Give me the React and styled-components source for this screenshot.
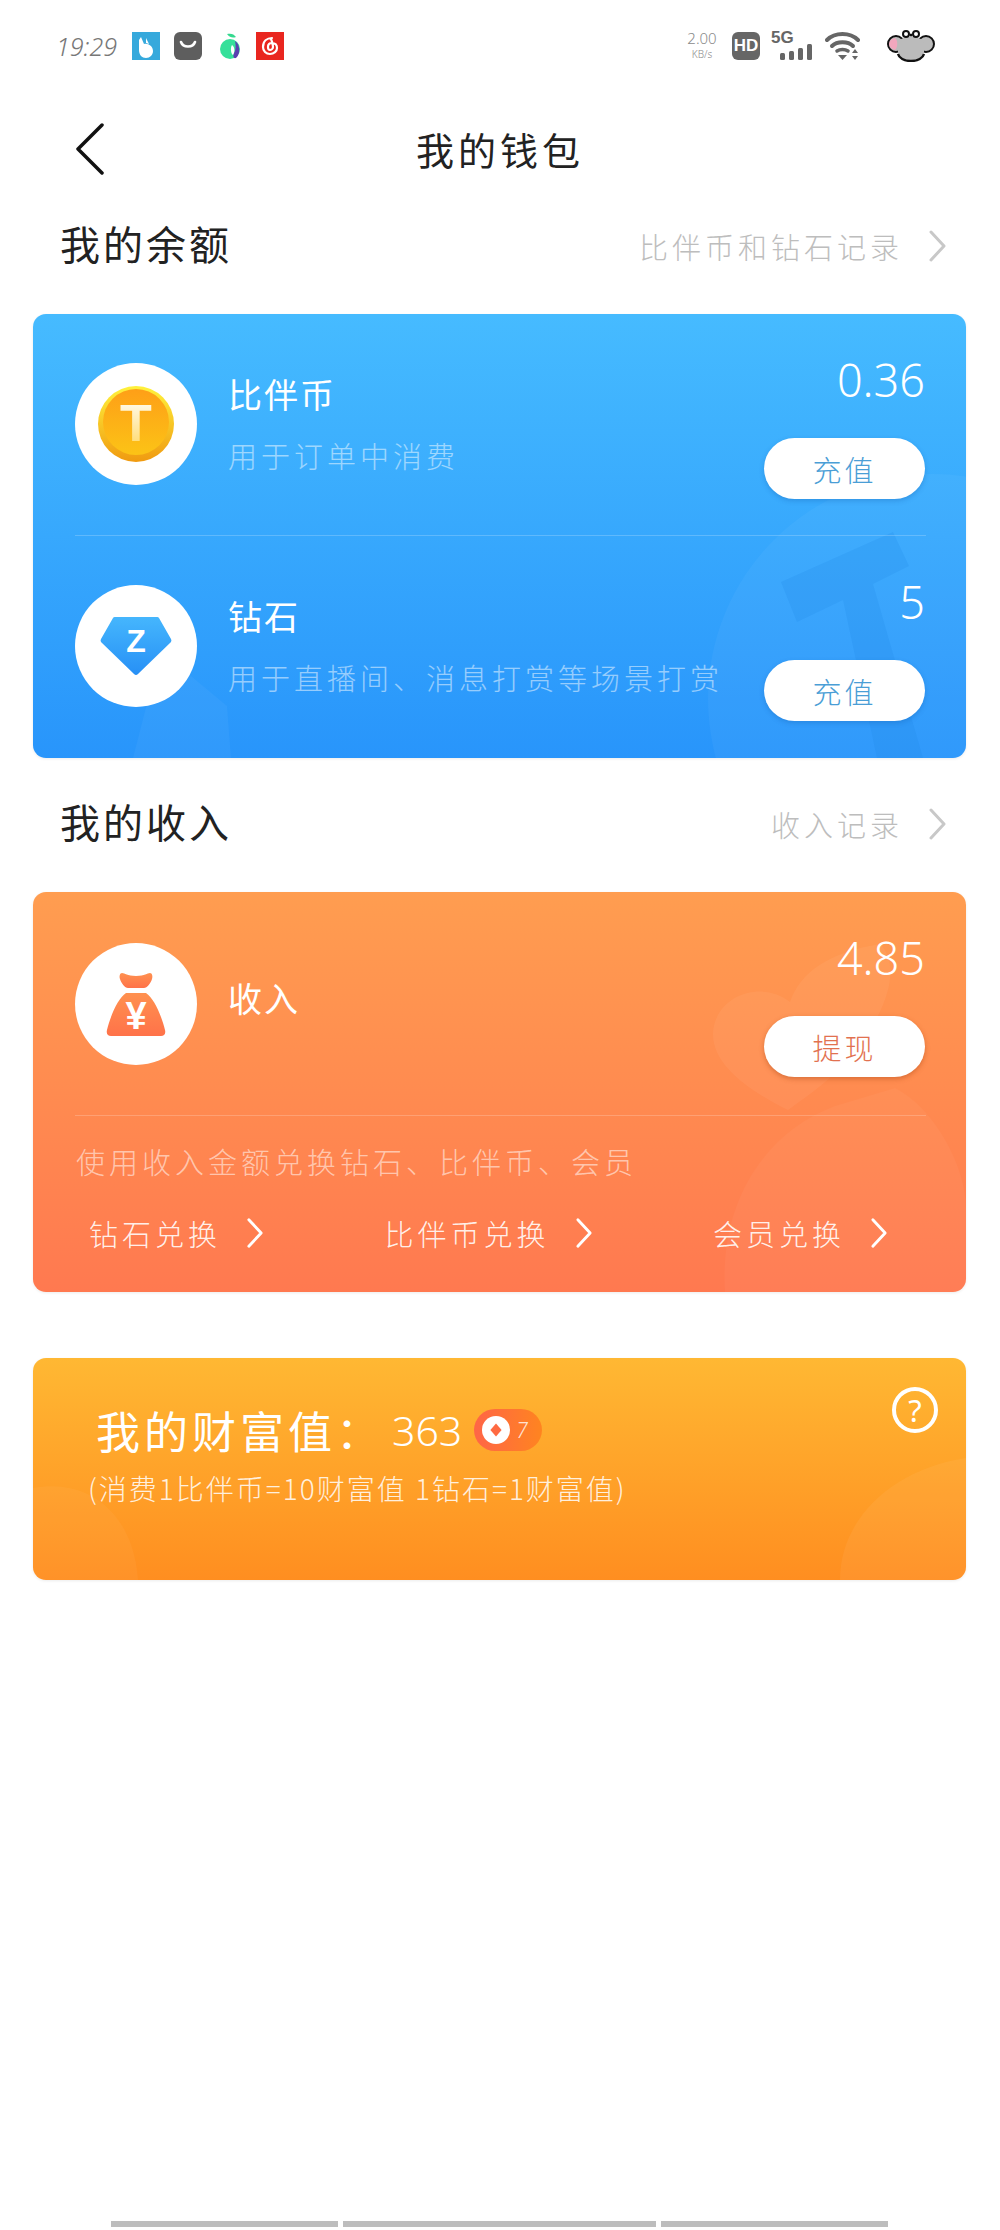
import React from 'react';
import styled, { createGlobalStyle } from 'styled-components';

const cjk = '"Noto Sans CJK SC", "Noto Sans", sans-serif';

const GlobalStyle = createGlobalStyle`
	* {
		box-sizing: border-box;
	}
	html, body {
		background: #fff;
		margin: 0;
		padding: 0;
	}
	body {
		color: #222;
		font-family: ${cjk};
		font-weight: 300;
	}
`;

const Page = styled.div`
	display: flex;
	flex-direction: column;
	min-height: 2230px;
	width: 1000px;
`;

const StatusBar = styled.div`
	align-items: center;
	display: flex;
	height: 62px;
	justify-content: space-between;
	padding: 30px 65px 0 56px;
`;

const StatusGroup = styled.div`
	align-items: center;
	display: flex;
`;

const Time = styled.span`
	color: #777;
	font-family: "Noto Sans", sans-serif;
	font-size: 25px;
	font-style: italic;
	font-weight: 300;
	margin-right: 14px;
	width: 62px;
`;

const AppIcon = styled.svg`
	display: block;
	height: 28px;
	margin-right: ${props => props.$gap}px;
	width: 28px;
`;

const Speed = styled.div`
	color: #8a8a8a;
	display: flex;
	flex-direction: column;
	font-family: "Noto Sans", sans-serif;
	font-size: 15px;
	line-height: 15px;
	margin-right: 15px;
	text-align: center;
	width: 30px;
	small {
		font-size: 10px;
		margin-top: 1px;
	}
`;

const HdBadge = styled.span`
	align-items: center;
	background: #666;
	border-radius: 6px;
	color: #fff;
	display: flex;
	font-family: "Liberation Sans", sans-serif;
	font-size: 17px;
	font-weight: 700;
	height: 28px;
	justify-content: center;
	margin-right: 11px;
	width: 28px;
`;

const Signal = styled.div`
	display: flex;
	flex-direction: column;
	height: 28px;
	margin-right: 12px;
	width: 42px;
	span {
		color: #666;
		font-family: "Liberation Sans", sans-serif;
		font-size: 17px;
		font-weight: 700;
		line-height: 12px;
	}
	svg {
		align-self: flex-end;
		margin-top: 0;
	}
`;

const TitleBar = styled.header`
	align-items: center;
	display: grid;
	grid-template-columns: 1fr auto 1fr;
	margin-top: 57px;
	padding: 0 75px;
`;

const PageTitle = styled.h1`
	font-size: 38px;
	font-weight: 400;
	letter-spacing: 4px;
	line-height: 60px;
	margin: 0;
`;

const SectionHead = styled.div`
	align-items: center;
	display: flex;
	height: 64px;
	justify-content: space-between;
	margin: ${props => props.$top}px 0 ${props => props.$bottom}px;
	padding: 0 53px 0 60px;
`;

const SectionTitle = styled.h2`
	font-size: 40px;
	font-weight: 400;
	letter-spacing: 3px;
	margin: 0;
`;

const RecordLink = styled.a`
	align-items: center;
	color: #bdbdbd;
	display: flex;
	font-size: 29px;
	gap: 25px;
	letter-spacing: 4px;
	margin-top: 6px;
`;

const Card = styled.section`
	background: linear-gradient(to bottom, ${props => props.$from}, ${props => props.$to});
	border-radius: 13px;
	box-shadow: 0 1px 3px rgba(0, 0, 0, 0.08);
	color: #fff;
	height: ${props => props.$height}px;
	margin: ${props => props.$top || 0}px 34px 0 33px;
	overflow: hidden;
	position: relative;
`;

const Watermark = styled.svg`
	height: 100%;
	left: 0;
	pointer-events: none;
	position: absolute;
	top: 0;
	width: 100%;
`;

const CardBody = styled.div`
	position: relative;
`;

const Row = styled.div`
	align-items: flex-start;
	display: flex;
	height: ${props => props.$height}px;
	padding: 42px 41px 0 42px;
`;

const Avatar = styled.div`
	align-items: center;
	background: #fff;
	border-radius: 50%;
	display: flex;
	flex: none;
	height: 122px;
	justify-content: center;
	margin-top: ${props => props.$top}px;
	width: 122px;
`;

const RowText = styled.div`
	flex: 1;
	margin-left: 31px;
	margin-top: ${props => props.$top}px;
`;

const RowTitle = styled.div`
	font-size: 34px;
	font-weight: 400;
	letter-spacing: 2px;
	line-height: 44px;
`;

const RowSub = styled.div`
	color: rgba(255, 255, 255, 0.5);
	font-size: 29px;
	letter-spacing: 4px;
	line-height: 44px;
	margin-top: 17px;
	white-space: nowrap;
`;

const RowSide = styled.div`
	align-items: flex-end;
	display: flex;
	flex-direction: column;
	flex: none;
`;

const Amount = styled.div`
	font-family: "Noto Sans", sans-serif;
	font-size: 45px;
	font-weight: 300;
	line-height: 48px;
`;

const ActionButton = styled.button`
	background: #fff;
	border: 0;
	border-radius: 31px;
	box-shadow: 0 2px 5px ${props => props.$shadow};
	color: ${props => props.$color};
	font-family: ${cjk};
	font-size: 29px;
	font-weight: 300;
	height: 61px;
	letter-spacing: 3px;
	margin-top: 34px;
	padding: 0;
	width: 161px;
`;

const Divider = styled.div`
	background: rgba(255, 255, 255, 0.2);
	height: 1px;
	margin: 0 40px 0 42px;
`;

const ExchangeNote = styled.div`
	color: rgba(255, 255, 255, 0.55);
	font-size: 29px;
	letter-spacing: 4px;
	line-height: 44px;
	margin-top: 23px;
	padding-left: 43px;
	white-space: nowrap;
`;

const ExchangeLinks = styled.div`
	display: flex;
	justify-content: space-between;
	margin-top: 28px;
	padding: 0 78px 0 56px;
`;

const ExchangeLink = styled.a`
	align-items: center;
	color: rgba(255, 255, 255, 0.9);
	display: flex;
	font-size: 29px;
	gap: 25px;
	letter-spacing: 4px;
	line-height: 44px;
	white-space: nowrap;
`;

const WealthTitle = styled.div`
	align-items: center;
	display: flex;
	font-size: 44px;
	font-weight: 400;
	height: 96px;
	letter-spacing: 4px;
	padding: 48px 0 0 63px;
	span {
		font-family: "Noto Sans", sans-serif;
		font-size: 41px;
		font-weight: 300;
		letter-spacing: 0;
		margin-left: 8px;
	}
`;

const LevelBadge = styled.div`
	align-items: center;
	background: linear-gradient(to right, #ff6547, #ff8420);
	border-radius: 21px;
	display: flex;
	height: 42px;
	margin-left: 12px;
	padding-left: 8px;
	width: 68px;
	i {
		color: rgba(255, 255, 255, 0.8);
		font-family: "Noto Sans", sans-serif;
		font-size: 21px;
		font-weight: 300;
		margin-left: 6px;
	}
`;

const WealthNote = styled.div`
	color: rgba(255, 255, 255, 0.85);
	font-size: 28px;
	letter-spacing: 2px;
	line-height: 36px;
	margin-top: 16px;
	padding-left: 55px;
	white-space: nowrap;
`;

const HelpButton = styled.div`
	align-items: center;
	border: 4px solid #fff;
	border-radius: 50%;
	display: flex;
	font-family: "Noto Sans", sans-serif;
	font-size: 31px;
	font-weight: 400;
	height: 46px;
	justify-content: center;
	line-height: 1;
	position: absolute;
	right: 28px;
	top: 29px;
	width: 46px;
`;

const NavBars = styled.div`
	display: flex;
	gap: 5px;
	margin-top: auto;
	padding: 0 112px 3px 111px;
`;

const NavBar = styled.div`
	background: #bdbdbd;
	flex: ${props => props.$size};
	height: 6px;
`;

const Chevron = ({ color, width = 19, height = 32, weight = 3 }) => (
	<svg width={width} height={height} viewBox="0 0 19 32" fill="none">
		<path d="M3 2l13 14L3 30" stroke={color} strokeWidth={weight} strokeLinecap="round" strokeLinejoin="round" />
	</svg>
);

const StatusIcons = () => (
	<StatusGroup>
		<Time>19:29</Time>
		<AppIcon $gap={14} viewBox="0 0 28 28">
			<rect width="28" height="28" fill="#36a9dc" />
			<path d="M9 5l3 7c4-1 9 2 9 7 0 4-3 7-7 7s-7-3-7-8V8z" fill="#fff" />
			<path d="M14 6l3 6-3-1z" fill="#fff" />
		</AppIcon>
		<AppIcon $gap={15} viewBox="0 0 28 28">
			<rect width="28" height="28" rx="6" fill="#5e5e5e" />
			<path d="M7 10c2 6 12 6 14 0" stroke="#fff" strokeWidth="2.6" fill="none" strokeLinecap="round" />
		</AppIcon>
		<AppIcon $gap={11} viewBox="0 0 28 28">
			<path d="M10 2c4-1 7 0 9 3-3 1-6 1-9-3z" fill="#35d98f" />
			<circle cx="13" cy="17" r="10" fill="#35e09a" />
			<path d="M18 9c5 3 6 13 1 17-3 1-3-3-2-5 2-3 2-8 1-12z" fill="#5b3fb0" />
			<path d="M15 13c3 2 3 7 1 10-2-1-3-7-1-10z" fill="#fff" />
		</AppIcon>
		<AppIcon $gap={0} viewBox="0 0 28 28">
			<rect width="28" height="28" fill="#e9261f" />
			<path d="M16 6c-5 0-9 3-9 9 0 4 3 7 7 7s7-3 7-6-2-5-5-5-4 2-4 4 1 3 2 3 3-1 3-3c0-3-1-6-2-8" stroke="#fff" strokeWidth="2.2" fill="none" strokeLinecap="round" />
		</AppIcon>
	</StatusGroup>
);

const SystemIcons = () => (
	<StatusGroup>
		<Speed>
			2.00
			<small>KB/s</small>
		</Speed>
		<HdBadge>HD</HdBadge>
		<Signal>
			<span>5G</span>
			<svg width="33" height="16" viewBox="0 0 33 16" fill="#666">
				<rect x="0" y="9" width="5" height="7" rx="1.5" />
				<rect x="9" y="7" width="5" height="9" rx="1.5" />
				<rect x="18" y="4" width="5" height="12" rx="1.5" />
				<rect x="27" y="0" width="5" height="16" rx="1.5" />
			</svg>
		</Signal>
		<svg width="36" height="28" viewBox="0 0 36 28" fill="none" style={{ marginRight: 26 }}>
			<path d="M2 8c8-8 23-8 31 0" stroke="#666" strokeWidth="4" strokeLinecap="round" />
			<path d="M7 14c5-5 16-5 21 0" stroke="#666" strokeWidth="4" strokeLinecap="round" />
			<path d="M12 19c3-2 8-2 11 0" stroke="#666" strokeWidth="3.5" strokeLinecap="round" />
			<path d="M13 23h9l-4.500 5z" fill="#666" />
			<path d="M30 17l3 4h-6zM30 28l3-4h-6z" fill="#666" />
		</svg>
		<svg width="48" height="32" viewBox="0 0 48 32">
			<circle cx="9" cy="14" r="8" fill="#bbb" stroke="#111" strokeWidth="2" />
			<circle cx="39" cy="14" r="8" fill="#bbb" stroke="#111" strokeWidth="2" />
			<path d="M2 14a7 7 0 0 1 6-6c3 2 3 9 0 12-3-1-6-3-6-6z" fill="#f2a7bd" />
			<path d="M11 14c0-5 6-7 13-7s13 2 13 7v8c0 5-5 9-13 9s-13-4-13-9z" fill="#bbb" />
			<path d="M11 24c1 4 6 7 13 7s12-3 13-7" stroke="#111" strokeWidth="2.4" fill="none" />
			<circle cx="19" cy="4" r="3" fill="none" stroke="#111" strokeWidth="2" />
			<circle cx="29" cy="4" r="3" fill="none" stroke="#111" strokeWidth="2" />
			<circle cx="24" cy="5" r="1.500" fill="#111" />
		</svg>
	</StatusGroup>
);

const CoinIcon = () => (
	<svg width="76" height="76" viewBox="0 0 76 76">
		<defs>
			<linearGradient id="coinRim" x1="0" y1="0" x2="0" y2="1">
				<stop offset="0" stopColor="#fff23c" />
				<stop offset="1" stopColor="#f09a10" />
			</linearGradient>
			<linearGradient id="coinFace" x1="0" y1="0" x2="0" y2="1">
				<stop offset="0" stopColor="#fe9f17" />
				<stop offset="1" stopColor="#fcc316" />
			</linearGradient>
			<linearGradient id="coinT" x1="0" y1="0" x2="0" y2="1">
				<stop offset="0" stopColor="#fff" />
				<stop offset="1" stopColor="#ffd75e" />
			</linearGradient>
		</defs>
		<circle cx="38" cy="38" r="38" fill="url(#coinRim)" />
		<circle cx="38" cy="36" r="33" fill="url(#coinFace)" />
		<text x="38" y="55" textAnchor="middle" fontFamily="Liberation Sans" fontWeight="700" fontSize="52" fill="url(#coinT)">T</text>
	</svg>
);

const DiamondIcon = () => (
	<svg width="72" height="60" viewBox="0 0 72 60">
		<defs>
			<linearGradient id="gem" x1="0" y1="0" x2="0" y2="1">
				<stop offset="0" stopColor="#45b6fd" />
				<stop offset="1" stopColor="#2790f6" />
			</linearGradient>
		</defs>
		<path d="M15 1h42a2 2 0 0 1 2 1l12 21a3 3 0 0 1 0 3L38 58a3 3 0 0 1-4 0L1 26a3 3 0 0 1 0-3L13 2a2 2 0 0 1 2-1z" fill="url(#gem)" />
		<text x="36" y="36" textAnchor="middle" fontFamily="Liberation Sans" fontWeight="700" fontSize="32" fill="#fff">Z</text>
	</svg>
);

const BagIcon = () => (
	<svg width="60" height="64" viewBox="0 0 60 64">
		<defs>
			<linearGradient id="bag" x1="0" y1="0" x2="0" y2="1">
				<stop offset="0" stopColor="#ff9150" />
				<stop offset="1" stopColor="#ff7249" />
			</linearGradient>
		</defs>
		<path d="M16 1c3 0 5 3 14 3s11-3 14-3c2 0 3 3 2 6-1 4-5 9-8 9H22c-3 0-7-5-8-9-1-3 0-6 2-6z" fill="url(#bag)" />
		<path d="M20 21h20c8 5 16 24 19 37 1 4-1 6-4 6H5c-3 0-5-2-4-6 3-13 11-32 19-37z" fill="url(#bag)" />
		<text x="30" y="57" textAnchor="middle" fontFamily="Liberation Sans" fontWeight="700" fontSize="38" fill="#fff">¥</text>
	</svg>
);

const BalanceRow = ({ icon, title, sub, amount, avatarTop = 7 }) => (
	<Row $height={221}>
		<Avatar $top={avatarTop}>{icon}</Avatar>
		<RowText $top={16}>
			<RowTitle>{title}</RowTitle>
			<RowSub>{sub}</RowSub>
		</RowText>
		<RowSide>
			<Amount>{amount}</Amount>
			<ActionButton $color="#4a9ed6" $shadow="rgba(20, 90, 170, 0.3)">充值</ActionButton>
		</RowSide>
	</Row>
);

const exchanges = ['钻石兑换', '比伴币兑换', '会员兑换'];

const App = () => (
	<Page>
		<GlobalStyle />
		<StatusBar>
			<StatusIcons />
			<SystemIcons />
		</StatusBar>
		<TitleBar>
			<svg width="30" height="52" viewBox="0 0 30 52" fill="none">
				<path d="M27 2L3 26l24 24" stroke="#111" strokeWidth="3.500" strokeLinecap="round" strokeLinejoin="round" />
			</svg>
			<PageTitle>我的钱包</PageTitle>
		</TitleBar>
		<SectionHead $top={32} $bottom={39}>
			<SectionTitle>我的余额</SectionTitle>
			<RecordLink>
				比伴币和钻石记录
				<Chevron color="#c8c8c8" />
			</RecordLink>
		</SectionHead>
		<Card $from="#46bbff" $to="#2895fb" $height={444}>
			<Watermark viewBox="0 0 933 444">
				<circle cx="900" cy="385" r="225" fill="#fff" fillOpacity="0.04" />
				<path d="M748 268l112-50 16 34-36 18 50 174h-46L810 286l-46 22z" fill="#1f86e8" fillOpacity="0.2" />
				<path d="M100 444l18-70 40-12 36 30 4 52z" fill="#fff" fillOpacity="0.04" />
			</Watermark>
			<CardBody>
				<BalanceRow icon={<CoinIcon />} title="比伴币" sub="用于订单中消费" amount="0.36" />
				<Divider />
				<BalanceRow icon={<DiamondIcon />} title="钻石" sub="用于直播间、消息打赏等场景打赏" amount="5" />
			</CardBody>
		</Card>
		<SectionHead $top={31} $bottom={39}>
			<SectionTitle>我的收入</SectionTitle>
			<RecordLink>
				收入记录
				<Chevron color="#c8c8c8" />
			</RecordLink>
		</SectionHead>
		<Card $from="#ff9d50" $to="#ff7950" $height={400}>
			<Watermark viewBox="0 0 933 400">
				<path d="M682 130c10-30 50-40 75-20 10-30 40-50 90-58 20 20 10 60-20 100-20 30-50 50-72 66-40-20-85-50-73-88z" fill="#fff" fillOpacity="0.05" />
				<path d="M692 400c-6-90 40-160 110-186l60-18c40 20 71 80 71 120v84z" fill="#fff" fillOpacity="0.035" />
			</Watermark>
			<CardBody>
				<Row $height={223}>
					<Avatar $top={9}><BagIcon /></Avatar>
					<RowText $top={42}>
						<RowTitle>收入</RowTitle>
					</RowText>
					<RowSide>
						<Amount>4.85</Amount>
						<ActionButton $color="#e2714f" $shadow="rgba(170, 70, 20, 0.45)">提现</ActionButton>
					</RowSide>
				</Row>
				<Divider />
				<ExchangeNote>使用收入金额兑换钻石、比伴币、会员</ExchangeNote>
				<ExchangeLinks>
					{exchanges.map(name => (
						<ExchangeLink key={name}>
							{name}
							<Chevron color="#fff" width={18} />
						</ExchangeLink>
					))}
				</ExchangeLinks>
			</CardBody>
		</Card>
		<Card $from="#ffb833" $to="#ff8e20" $height={222} $top={66}>
			<Watermark viewBox="0 0 933 222">
				<path d="M807 222c0-60 50-110 126-122v122z" fill="#fff" fillOpacity="0.05" />
				<path d="M0 130c50-10 100 20 105 92H0z" fill="#fff" fillOpacity="0.04" />
			</Watermark>
			<CardBody>
				<WealthTitle>
					我的财富值：
					<span>363</span>
					<LevelBadge>
						<svg width="28" height="28" viewBox="0 0 30 30">
							<circle cx="15" cy="15" r="15" fill="#fff" />
							<path d="M15 8l6 7-6 7-6-7z" fill="#ff6a42" />
						</svg>
						<i>7</i>
					</LevelBadge>
				</WealthTitle>
				<WealthNote>(消费1比伴币=10财富值 1钻石=1财富值)</WealthNote>
			</CardBody>
			<HelpButton>?</HelpButton>
		</Card>
		<NavBars>
			<NavBar $size={227} />
			<NavBar $size={314} />
			<NavBar $size={227} />
		</NavBars>
	</Page>
);

export default App;
